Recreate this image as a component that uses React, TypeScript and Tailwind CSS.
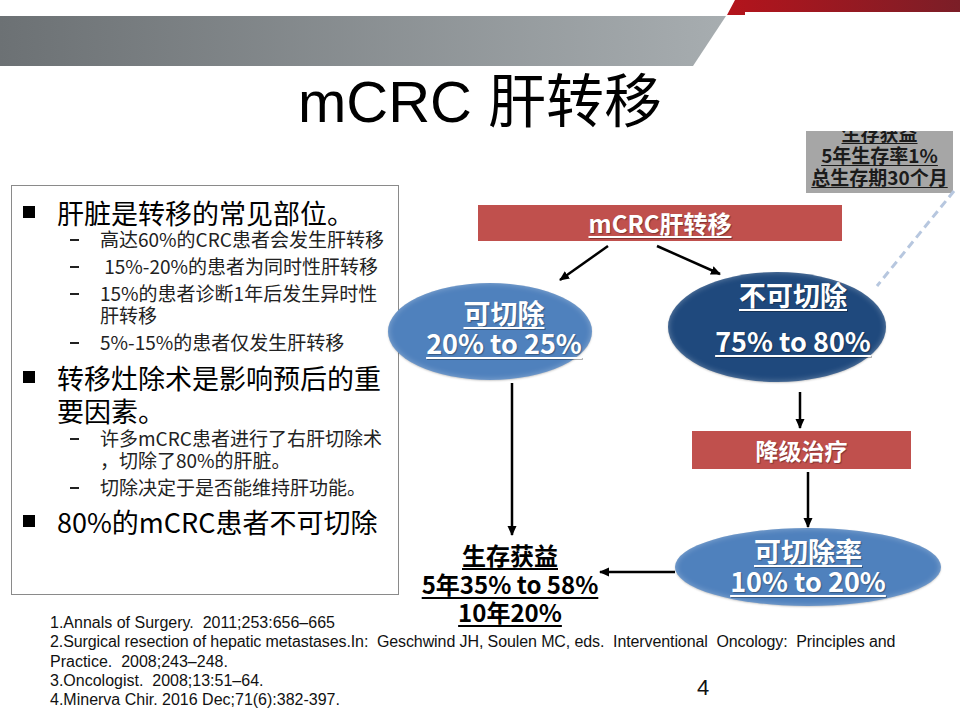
const cjk = "font-['Noto_Sans_CJK_SC','Noto_Sans',sans-serif]";

const subItems1 = [
  ['高达60%的CRC患者会发生肝转移'],
  [' 15%-20%的患者为同时性肝转移'],
  ['15%的患者诊断1年后发生异时性', '肝转移'],
  ['5%-15%的患者仅发生肝转移'],
];

const subItems2 = [
  ['许多mCRC患者进行了右肝切除术', '，切除了80%的肝脏。'],
  ['切除决定于是否能维持肝功能。'],
];

function Heading({ lines, className = '' }: { lines: string[]; className?: string }) {
  return (
    <div className={`flex items-start ${className}`}>
      <div className="w-[12px] h-[12px] bg-black mt-[10px] mr-[22px] shrink-0" />
      <div className="text-[27px] leading-[33px] text-black">
        {lines.map((l) => (
          <div key={l} className="whitespace-nowrap">{l}</div>
        ))}
      </div>
    </div>
  );
}

function SubItem({ lines, className = '' }: { lines: string[]; className?: string }) {
  return (
    <div className={`flex items-start pl-[47px] text-[19px] leading-[22px] text-[#222] ${className}`}>
      <span className="w-[30px] shrink-0 pt-[11px]">
        <span className="block w-[9px] h-[2px] bg-[#222]" />
      </span>
      <div>
        {lines.map((l) => (
          <div key={l} className="whitespace-pre">{l}</div>
        ))}
      </div>
    </div>
  );
}

function Ellipse({ color, lines, box, textShift, gap }: {
  color: string; lines: string[]; box: string; textShift: string; gap: string;
}) {
  return (
    <div className={`absolute rounded-[50%] flex flex-col items-center justify-center text-white font-bold text-[27px] leading-[30px] shadow-[inset_0_0_6px_rgba(255,255,255,0.35),0_1px_2px_rgba(0,0,0,0.2)] ${color} ${box}`}>
      <div className={`flex flex-col items-center ${textShift} ${gap}`}>
        {lines.map((l) => (
          <span key={l} className="underline decoration-[2px] underline-offset-[3px] whitespace-nowrap [text-shadow:1px_1px_1px_rgba(0,0,0,0.3)]">{l}</span>
        ))}
      </div>
    </div>
  );
}

export default function App() {
  return (
    <div className={`relative w-[960px] h-[720px] bg-white overflow-hidden ${cjk}`}>
      {/* Header band */}
      <div className="relative h-[66px]">
        <svg className="absolute inset-0" width="960" height="66" viewBox="0 0 960 66">
          <defs>
            <linearGradient id="gray" x1="0" x2="1" y1="0" y2="0">
              <stop offset="0" stopColor="#6c7174" />
              <stop offset="1" stopColor="#a7adb0" />
            </linearGradient>
            <linearGradient id="red" x1="0" x2="1" y1="0" y2="0">
              <stop offset="0" stopColor="#b4141c" />
              <stop offset="1" stopColor="#7b1e27" />
            </linearGradient>
          </defs>
          <polygon points="0,16 726,16 693,66 0,66" fill="url(#gray)" />
          <polygon points="735,0 960,0 960,12 745,12 745,15 727,15" fill="url(#red)" />
        </svg>
      </div>

      {/* Title */}
      <h1 className="mt-[4px] h-[65px] text-center text-[58px] leading-[64px] text-black font-['Liberation_Sans','Noto_Sans_CJK_SC',sans-serif]">
        mCRC 肝转移
      </h1>

      {/* Callout */}
      <div className="absolute left-[806px] top-[131px] w-[147px] h-[62px] bg-[#a6a6a6] overflow-hidden">
        <div className="mt-[-9px] flex flex-col items-center text-[19px] leading-[22px] font-bold text-[#1b1b1b]">
          {['生存获益', '5年生存率1%', '总生存期30个月'].map((l) => (
            <span key={l} className="underline underline-offset-[2px] whitespace-nowrap">{l}</span>
          ))}
        </div>
      </div>

      {/* Main row */}
      <div className="flex mt-[50px]">
        <div className="ml-[11px] w-[388px] h-[410px] border border-[#8a8a8a] pl-[11px] pt-[10px] shrink-0">
          <Heading lines={['肝脏是转移的常见部位。']} />
          <SubItem lines={subItems1[0]} className="mt-[-1px]" />
          <SubItem lines={subItems1[1]} className="mt-[5px]" />
          <SubItem lines={subItems1[2]} className="mt-[5px]" />
          <SubItem lines={subItems1[3]} className="mt-[5px]" />
          <Heading lines={['转移灶除术是影响预后的重', '要因素。']} className="mt-[8px]" />
          <SubItem lines={subItems2[0]} />
          <SubItem lines={subItems2[1]} className="mt-[5px]" />
          <Heading lines={['80%的mCRC患者不可切除']} className="mt-[7px]" />
        </div>

        {/* Flowchart canvas */}
        <div className="relative flex-1 h-[410px]">
          <svg className="absolute left-0 top-0 overflow-visible" width="561" height="410">
            <defs>
              <marker id="ah" markerWidth="11" markerHeight="11" refX="9" refY="5.5" orient="auto" markerUnits="userSpaceOnUse">
                <path d="M0,1 L10,5.5 L0,10 z" fill="#000" />
              </marker>
            </defs>
            <g stroke="#000" strokeWidth="2.5" markerEnd="url(#ah)">
              <line x1="209" y1="61" x2="161" y2="95" />
              <line x1="258" y1="61" x2="321" y2="89" />
              <line x1="113" y1="198" x2="113" y2="350" />
              <line x1="401" y1="207" x2="401" y2="243" />
              <line x1="409" y1="287" x2="409" y2="342" />
              <line x1="276" y1="387" x2="201" y2="387" />
            </g>
            <line x1="555" y1="6" x2="478" y2="101" stroke="#b7c7df" strokeWidth="3" strokeDasharray="8 5" />
          </svg>

          <div className="absolute left-[79px] top-[20px] w-[364px] h-[36px] bg-[#c0504d] flex items-center justify-center text-white font-bold text-[24px]">
            <span className="underline decoration-[2px] underline-offset-[3px] [text-shadow:1px_1px_1px_rgba(0,0,0,0.35)]">mCRC肝转移</span>
          </div>

          <Ellipse color="bg-[#4f81bd]" lines={['可切除', '20% to 25%']} box="left-[-11px] top-[98px] w-[204px] h-[97px]" textShift="ml-[28px] mb-[8px]" gap="gap-0" />
          <Ellipse color="bg-[#1f497d]" lines={['不可切除', '75% to 80%']} box="left-[269px] top-[87px] w-[218px] h-[110px]" textShift="ml-[32px] mb-[18px]" gap="gap-[16px]" />

          <div className="absolute left-[293px] top-[246px] w-[219px] h-[38px] bg-[#c0504d] flex items-center justify-center text-white font-bold text-[23px]">
            <span className="[text-shadow:1px_1px_1px_rgba(0,0,0,0.35)]">降级治疗</span>
          </div>

          <Ellipse color="bg-[#4f81bd]" lines={['可切除率', '10% to 20%']} box="left-[276px] top-[343px] w-[266px] h-[78px]" textShift="mb-[3px]" gap="gap-0" />

          <div className="absolute left-[11px] top-[356px] w-[200px] flex flex-col items-center text-black font-bold text-[24px] leading-[28.5px]">
            {['生存获益', '5年35% to 58%', '10年20%'].map((l) => (
              <span key={l} className="underline decoration-[2px] underline-offset-[3px] whitespace-nowrap">{l}</span>
            ))}
          </div>
        </div>
      </div>

      {/* References */}
      <div className="relative mt-[18px] pl-[50px] text-[16px] leading-[19.3px] text-[#111] font-['Liberation_Sans_Narrow','Liberation_Sans',sans-serif]">
        <div className="whitespace-pre">1.Annals of Surgery.  2011;253:656–665</div>
        <div className="whitespace-pre tracking-[-0.1px]">2.Surgical resection of hepatic metastases.In:  Geschwind JH, Soulen MC, eds.  Interventional  Oncology:  Principles and</div>
        <div className="whitespace-pre">Practice.  2008;243–248.</div>
        <div className="whitespace-pre">3.Oncologist.  2008;13:51–64.</div>
        <div className="whitespace-pre">4.Minerva Chir. 2016 Dec;71(6):382-397.</div>
        <span className="absolute left-[697px] top-[62px] text-[22px] leading-[26px]">4</span>
      </div>
    </div>
  );
}
